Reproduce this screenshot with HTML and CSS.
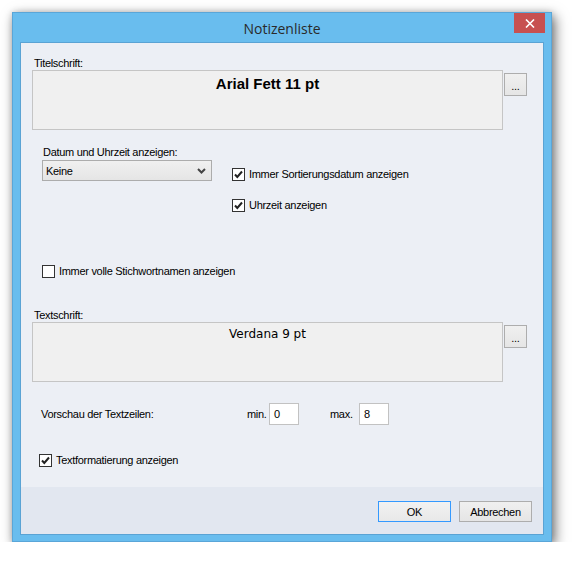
FILE: index.html
```html
<!DOCTYPE html>
<html lang="de">

<head>
  <meta charset="UTF-8">
  <meta name="viewport" content="width=device-width, initial-scale=1.0">
  <title>Notizenliste</title>
  <link rel="stylesheet" href="styles.css">
</head>

<body>
  <div class="window">
    <div class="titlebar">
      <div class="title">Notizenliste</div>
      <div class="close">
        <svg width="10" height="9" viewBox="0 0 10 9">
          <path d="M1 0.5 L9 8.5 M9 0.5 L1 8.5" stroke="#fff" stroke-width="1.6" fill="none" />
        </svg>
      </div>
    </div>
    <div class="client">
      <div class="content">
        <!-- Titelschrift -->
        <div class="font-group">
          <div class="group-label">Titelschrift:</div>
          <div class="font-row">
            <div class="font-box title-font">Arial Fett 11 pt</div>
            <div class="btn more">...</div>
          </div>
        </div>

        <!-- Datum und Uhrzeit -->
        <div class="date-section">
          <div class="date-left">
            <div class="date-label">Datum und Uhrzeit anzeigen:</div>
            <div class="select">
              <span>Keine</span>
              <svg width="9" height="6" viewBox="0 0 9 6">
                <path d="M1 1 L4.5 4.5 L8 1" stroke="#444" stroke-width="2" fill="none" />
              </svg>
            </div>
          </div>
          <div class="date-right">
            <div class="check">
              <span class="box checked">
                <svg width="11" height="11" viewBox="0 0 11 11">
                  <path d="M2 5.5 L4.3 8 L9 2.5" stroke="#222" stroke-width="2" fill="none" />
                </svg>
              </span>
              Immer Sortierungsdatum anzeigen
            </div>
            <div class="check">
              <span class="box checked">
                <svg width="11" height="11" viewBox="0 0 11 11">
                  <path d="M2 5.5 L4.3 8 L9 2.5" stroke="#222" stroke-width="2" fill="none" />
                </svg>
              </span>
              Uhrzeit anzeigen
            </div>
          </div>
        </div>

        <div class="check keywords">
          <span class="box"></span>
          Immer volle Stichwortnamen anzeigen
        </div>

        <!-- Textschrift -->
        <div class="font-group text-group">
          <div class="group-label">Textschrift:</div>
          <div class="font-row">
            <div class="font-box text-font">Verdana 9 pt</div>
            <div class="btn more">...</div>
          </div>
        </div>

        <div class="preview-row">
          <div class="preview-label">Vorschau der Textzeilen:</div>
          <div class="unit">min.</div>
          <div class="num">0</div>
          <div class="unit unit-max">max.</div>
          <div class="num">8</div>
        </div>

        <div class="check formatting">
          <span class="box checked">
            <svg width="11" height="11" viewBox="0 0 11 11">
              <path d="M2 5.5 L4.3 8 L9 2.5" stroke="#222" stroke-width="2" fill="none" />
            </svg>
          </span>
          Textformatierung anzeigen
        </div>
      </div>

      <div class="footer">
        <div class="btn action default">OK</div>
        <div class="btn action">Abbrechen</div>
      </div>
    </div>
  </div>
</body>

</html>
```

FILE: styles.css
```css
body {
  margin: 0;
  background: #fff;
  font-family: "Liberation Sans", Arial, sans-serif;
  font-size: 11px;
  letter-spacing: -0.3px;
  color: #000;
}

.window {
  margin: 12px 0 0 12px;
  width: 540px;
  height: 530px;
  box-sizing: border-box;
  background: #69bdee;
  border: 1px solid #5aa6d8;
  box-shadow: 3px 4px 12px rgba(0, 0, 0, 0.55), 0 0 6px rgba(0, 0, 0, 0.15);
  padding: 0 0 6px;
  display: flex;
  flex-direction: column;
}

.titlebar {
  height: 29px;
  display: grid;
  grid-template-columns: 1fr auto 1fr;
  padding: 0 6px;
}

.titlebar .title {
  grid-column: 2;
  font-family: "Open Sans", "Noto Sans", sans-serif;
  font-size: 14px;
  letter-spacing: 0;
  color: #2a2a2a;
  line-height: 29px;
  padding-top: 1px;
}

.titlebar .close {
  grid-column: 3;
  justify-self: end;
  width: 31px;
  height: 20px;
  background: #c75050;
  display: flex;
  align-items: center;
  justify-content: center;
}

.client {
  flex: 1;
  margin: 0 7px;
  border: 1px solid #5aa3d4;
  display: flex;
  flex-direction: column;
  background: #eceff5;
}

.content {
  flex: 1;
  padding-top: 14px;
}

.group-label {
  margin-left: 2px;
  line-height: 13px;
}

.font-group {
  margin-left: 11px;
}

.font-row {
  display: flex;
  align-items: flex-start;
  gap: 1px;
}

.font-box {
  width: 471px;
  height: 60px;
  box-sizing: border-box;
  background: #f0f0f0;
  border: 1px solid #c5c5c5;
  text-align: center;
  letter-spacing: 0;
}

.title-font {
  font-family: "Liberation Sans", Arial, sans-serif;
  font-weight: bold;
  font-size: 15px;
  padding-top: 4px;
}

.text-font {
  font-family: "DejaVu Sans", Verdana, sans-serif;
  font-size: 12px;
  padding-top: 4px;
}

.btn {
  box-sizing: border-box;
  border: 1px solid #adadad;
  background: linear-gradient(#f0f0f0, #e5e5e5);
  display: flex;
  align-items: center;
  justify-content: center;
}

.more {
  margin-top: 3px;
  width: 23px;
  height: 23px;
  padding-top: 2px;
}

.date-section {
  display: flex;
  margin: 16px 0 0 21px;
}

.date-left {
  width: 190px;
}

.date-label {
  margin-left: 1px;
  line-height: 13px;
}

.select {
  margin-top: 1px;
  width: 170px;
  height: 21px;
  box-sizing: border-box;
  border: 1px solid #acacac;
  background: linear-gradient(#f0f0f0, #e5e5e5);
  display: flex;
  align-items: center;
  justify-content: space-between;
  padding: 0 5px 0 3px;
}

.date-right {
  padding-top: 22px;
  display: flex;
  flex-direction: column;
  gap: 18px;
}

.check {
  display: flex;
  align-items: center;
  gap: 4px;
  height: 13px;
  line-height: 13px;
}

.box {
  width: 13px;
  height: 13px;
  box-sizing: border-box;
  border: 1px solid #333;
  background: #fff;
  display: flex;
  align-items: center;
  justify-content: center;
}

.keywords {
  margin: 53px 0 0 21px;
}

.text-group {
  margin-top: 31px;
}

.preview-row {
  display: flex;
  align-items: center;
  margin: 21px 0 0 20px;
  height: 22px;
}

.preview-label {
  width: 206px;
}

.unit {
  width: 22px;
}

.unit-max {
  width: 29px;
  margin-left: 31px;
}

.num {
  width: 30px;
  height: 22px;
  box-sizing: border-box;
  border: 1px solid #c2c2c2;
  background: #fff;
  padding: 4px 0 0 4px;
  line-height: 13px;
}

.formatting {
  margin: 29px 0 0 18px;
}

.footer {
  height: 47px;
  background: #e2e7f0;
  display: flex;
  justify-content: flex-end;
  align-items: flex-start;
  gap: 8px;
  padding: 14px 11px 0 0;
  box-sizing: border-box;
}

.action {
  width: 73px;
  height: 21px;
}

.default {
  border-color: #3399ff;
  background: linear-gradient(#f2f2f2, #e8e8e8);
}
```
